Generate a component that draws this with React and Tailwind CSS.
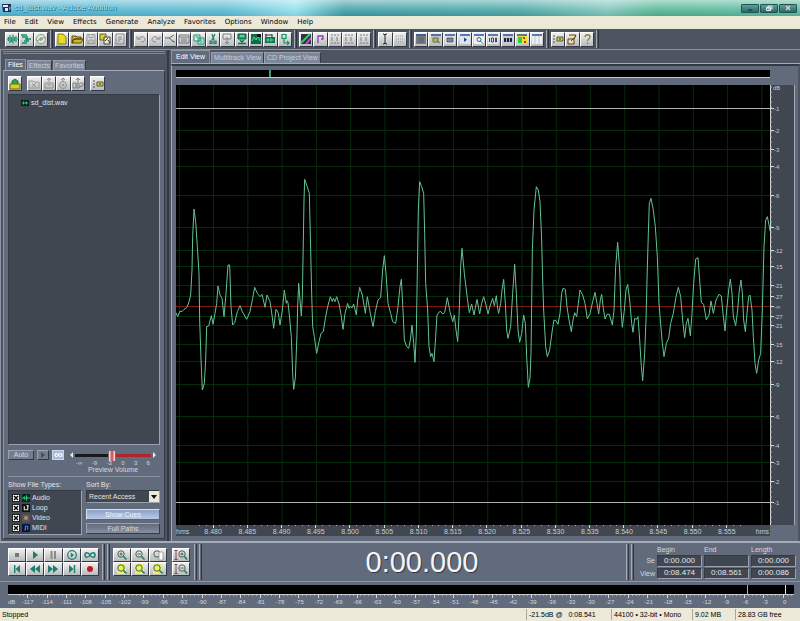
import React from "react";

/* ---------- small drawings used on the tool buttons ---------- */

const GLYPHS = {
  wave: <path d="M1 6h1M2.500 4v4M4 2v8M5.500 4v5M7 1.500v9M8.500 4v4M10 3v6M11 6h1" stroke="#12936a" strokeWidth="1.200" />,
  multi: <path d="M1 2h6M2 4h4M5 6h6M4 8h5M2 10h5M7 3v5" stroke="#12936a" strokeWidth="1.500" />,
  cd: <g fill="none" stroke="#8b9b78"><circle cx="6" cy="6" r="4.500" fill="#e6e8dc" /><circle cx="6" cy="6" r="1.300" /><path d="M2 8l8-4" stroke="#5faa80" /></g>,
  page: <path d="M2 1h5l3 3v7H2z" fill="#e8dc1c" stroke="#6b6410" strokeWidth=".8" />,
  folder: <path d="M1 3h4l1 1h4v2H3L1 10zM3 6h9l-2 4H1z" fill="#d8b81c" stroke="#4a4010" strokeWidth=".9" />,
  disk: <path d="M2 1.500h8v9H2zM4 1.500v3h4v-3M4 10V7h4v3" fill="none" stroke="#9a9a9a" />,
  copyFolder: <g strokeWidth=".9"><path d="M1 1h6v6H1z" fill="#e2cf2a" stroke="#555020" /><path d="M5 4h6v7H5z" fill="#ece8c8" stroke="#333" /><path d="M6 8l3-3M9 7l2 3" stroke="#222" /></g>,
  doc: <path d="M2 1h8v10H2zM4 4h4M4 6h4M4 8h2" fill="none" stroke="#858585" />,
  undo: <path d="M2 3v3h4M3 6c2-3 6-3 7 0 0 2-1 3-4 3" fill="none" stroke="#8a8a8a" />,
  redo: <path d="M10 3v3H6M9 6c-2-3-6-3-7 0 0 2 1 3 4 3" fill="none" stroke="#8a8a8a" />,
  node: <path d="M1 5h4l5-3M5 5l5 4M8 8l3 1" fill="none" stroke="#666" />,
  box: <path d="M1 2h10v8H1zM1 4h10M3 6h6M3 8h6" fill="none" stroke="#777" />,
  copy: <path d="M1 2h6v6H1zM5 5h6v6H5zM2.500 4h3M6.500 7h3M6.500 9h3" fill="#dff5ea" stroke="#15936c" />,
  cut: <path d="M5 1l2 6M8 1L5 7M3 8h2v2.500H3zM7 8h2v2.500H7z" fill="none" stroke="#168060" strokeWidth="1.200" />,
  paste: <path d="M2 1h8v5H2zM6 4v7M4 9l2 2 2-2" fill="none" stroke="#808080" />,
  mixPaste: <g><path d="M2 1h8v5H2z" fill="#19a566" stroke="#0c5b3c" /><path d="M4 3h4" stroke="#bdf3d8" /><path d="M4 7l2 2 2-2M2 10.500h8" stroke="#117a4c" strokeWidth="1.500" /></g>,
  darkWave: <g><path d="M1 1h10v10H1z" fill="#0f6b43" /><path d="M2 8l2-4 2 3 2-4 2 5" fill="none" stroke="#54e08b" /><path d="M7 1h4v3H7z" fill="#112" /></g>,
  crop: <g><path d="M1 4h10v6H1z" fill="#12724c" /><path d="M2 7h8M4 5v4M7 5v4" stroke="#48d68c" /><path d="M1 2h7M2 1v3M8 1v3" stroke="#333" /></g>,
  loop: <path d="M3 1.500h4v4H3zM5 6v4h5M8 8l2 2-2 2" fill="none" stroke="#149168" strokeWidth="1.200" />,
  spectral: <g><path d="M1 1h10v10H1z" fill="#3a2b59" /><path d="M1 10L10 1" stroke="#3ecb55" strokeWidth="2" /><path d="M6 11l5-6" stroke="#bf66d8" strokeWidth="1.500" /></g>,
  step: <path d="M3 10V3h5v3H6" fill="none" stroke="#8a3cae" strokeWidth="1.300" />,
  grid: <path d="M2 2h8M2 5h3M7 5h3M2 7h3M7 7h3M2 10h8" fill="none" stroke="#7c7c7c" strokeDasharray="2 1" />,
  ibeam: <path d="M4 1h1l1 1 1-1h1M6 2v8M4 11h1l1-1 1 1h1" fill="none" stroke="#222" />,
  dotted: <path d="M2 3h8M2 6h8M2 9h8" stroke="#9a9a9a" strokeDasharray="1 1" />,
  winList: <g><path d="M1 1h10v10H1z" fill="#777a80" /><path d="M1 2h10" stroke="#2c54a8" strokeWidth="1.500" /><path d="M3 5h6M3 7h6M3 9h6" stroke="#5b5e65" /></g>,
  winZoom: <g><path d="M1 1h10v10H1z" fill="#c4c6b8" /><path d="M1 2h10" stroke="#2c54a8" strokeWidth="1.500" /><path d="M3 5h5v4H3zM7 8l3 2" fill="#b8b848" stroke="#666" /></g>,
  winPic: <g><path d="M1 1h10v10H1z" fill="#dde0e4" /><path d="M1 2h10" stroke="#2c54a8" strokeWidth="1.500" /><path d="M3 5h6v4H3z" fill="#789" stroke="#444" strokeWidth=".7" /></g>,
  winPlay: <g><path d="M1 1h10v10H1z" fill="#dfe4ee" /><path d="M1 2h10" stroke="#2c54a8" strokeWidth="1.500" /><path d="M5 4.500l3 2.200-3 2.200z" fill="#124e8d" /></g>,
  winLens: <g><path d="M1 1h10v10H1z" fill="#eef0f6" /><path d="M1 2h10" stroke="#2c54a8" strokeWidth="1.500" /><circle cx="6" cy="6.500" r="2" fill="none" stroke="#277" /><path d="M7.500 8l2.500 2.500" stroke="#277" /></g>,
  winTime: <g><path d="M1 1h10v10H1z" fill="#e4e6ea" /><path d="M1 2h10" stroke="#2c54a8" strokeWidth="1.500" /><path d="M2.500 5v4M4.500 5h2v4h-2zM8.500 5h1v4h-1z" fill="none" stroke="#445" /></g>,
  winDark: <g><path d="M1 1h10v10H1z" fill="#c6cad4" /><path d="M1 2h10" stroke="#2c54a8" strokeWidth="1.500" /><path d="M2 5h8v4H2z" fill="#223" /><path d="M4.500 5v4M7.500 5v4" stroke="#aab" /></g>,
  winColor: <g><path d="M1 1h10v10H1z" fill="#e9e42f" /><path d="M1 2h10" stroke="#2c54a8" strokeWidth="1.500" /><path d="M2 4h4v6H2z" fill="#27d341" /><path d="M7 4h2v2H7zM8 8h2v2H8z" fill="#d22" /></g>,
  winBlank: <g><path d="M1 1h10v10H1z" fill="#eceef2" /><path d="M1 2h10" stroke="#2c54a8" strokeWidth="1.500" /><path d="M4 3v8M8 3v8" stroke="#c0c8d8" /></g>,
  options: <g><path d="M1 3h2M1 6h2M1 9h2" stroke="#555" /><path d="M5 4h6v4H5z" fill="#d8cf2a" stroke="#555" /><path d="M7 6h2" stroke="#333" /></g>,
  script: <path d="M3 2h7l-2 4M2 6h6v5H2zM5 8l5-5" fill="#ecdfae" stroke="#5c4416" />,
  help: <path d="M4 4c0-3 5-3 5 0 0 2-2.500 2-2.500 4M6.500 9.500v1.500" fill="none" stroke="#8b7f34" strokeWidth="1.300" />,
  open: <g><path d="M1 6h10v5H1z" fill="#d3cf25" stroke="#55521a" strokeWidth=".8" /><path d="M3 6V3l3-2 3 2v3" fill="#2da04a" stroke="#1b5f2e" strokeWidth=".8" /></g>,
  close: <path d="M1 3h4l1 1h5v6H1zM4 5l4 4M8 5L4 9" fill="none" stroke="#9a9a9a" />,
  insert: <path d="M6 0v4M4 2l2-2 2 2M2 5h8v5H2zM4 7h4" fill="none" stroke="#8e8e8e" />,
  disc: <g fill="none" stroke="#8e8e8e"><circle cx="6" cy="7" r="3.500" /><circle cx="6" cy="7" r="1" /><path d="M6 0v3M4 2l2-2 2 2" /></g>,
  loopInsert: <path d="M6 0v4M4 2l2-2 2 2M1 5h3v5H1zM5 5h2v5H5zM8 5h3v3H8v2" fill="none" stroke="#7e7e7e" />,
};

const PLAY = "#1b7e70";
const TRANSPORT = [
  ["Stop", <path d="M6 4h4v4H6z" fill="#777" />],
  ["Play", <path d="M6 2l5 4-5 4z" fill={PLAY} />],
  ["Pause", <path d="M5.500 2h2v8h-2zM9 2h2v8H9z" fill="#8a8a8a" />],
  ["Play to end", <g><circle cx="8" cy="6" r="4.300" fill="none" stroke={PLAY} strokeWidth="1.200" /><path d="M6.800 3.500L10 6 6.800 8.500z" fill={PLAY} /></g>],
  ["Loop", <path d="M8 6c-1.500-3-5-3-5 0s3.500 3 5 0 5-3 5 0-3.500 3-5 0z" fill="none" stroke={PLAY} strokeWidth="1.500" />],
  ["Go to start", <path d="M5 2h1.400v8H5zM11 2v8L6.500 6z" fill={PLAY} />],
  ["Rewind", <path d="M8 2v8L3 6zM13 2v8L8 6z" fill={PLAY} />],
  ["Fast forward", <path d="M3 2v8l5-4zM8 2v8l5-4z" fill={PLAY} />],
  ["Go to end", <path d="M9.800 2h1.400v8H9.800zM5 2v8l4.500-4z" fill={PLAY} />],
  ["Record", <circle cx="8" cy="6" r="3" fill="#c4181f" />],
];

function Lens({ inner, page }) {
  return (
    <g fill="none" stroke="#3f6258">
      {page === "yellow" && <path d="M3 1h9v10H3z" fill="#eeee62" stroke="none" />}
      <circle cx="7" cy="5" r="3.200" />
      <path d="M9.500 7.500l3 3" stroke="#21806b" strokeWidth="1.700" />
      {page === "white" && <path d="M9 3h4v8H9z" fill="#fff" stroke="#888" strokeWidth=".7" />}
      {inner && <path d={inner} strokeWidth="1" />}
    </g>
  );
}

const ZOOMS = [
  ["Zoom in", <Lens inner="M5.500 5h3M7 3.500v3" />],
  ["Zoom out", <Lens inner="M5.500 5h3" />],
  ["Zoom full", <Lens page="white" />],
  ["Zoom to selection", <Lens page="yellow" />],
  ["Zoom to left edge", <Lens page="yellow" />],
  ["Zoom to right edge", <Lens page="yellow" />],
];

const VERTICAL_ZOOMS = [
  ["Zoom in vertically", "M7.500 5h3M9 3.500v3"],
  ["Zoom out vertically", "M7.500 5h3"],
];

const TOOL_GROUPS = [
  { width: "w-[43px]", icons: ["wave", "multi", "cd"] },
  { width: "w-[72px]", icons: ["page", "folder", "disk", "copyFolder", "doc"] },
  { width: "w-[158px]", icons: ["undo", "redo", "node", "box", "copy", "cut", "paste", "mixPaste", "darkWave", "crop", "loop"] },
  { width: "w-[72px]", icons: ["spectral", "step", "grid", "grid", "grid"] },
  { width: "w-[29px]", icons: ["ibeam", "dotted"] },
  { width: "w-[130px]", icons: ["winList", "winZoom", "winPic", "winPlay", "winLens", "winTime", "winDark", "winColor", "winBlank"] },
  { width: "w-[43px]", icons: ["options", "script", "help"] },
];

const KEY =
  "flex min-w-0 items-center justify-center overflow-hidden border border-t-white border-l-white border-r-[#343a45] border-b-[#343a45] bg-linear-to-b from-[#f0f0ef] to-[#b9babc]";

function ToolButton({ name, className = "" }) {
  return (
    <button type="button" aria-label={name} className={`${KEY} h-[15px] ${className}`}>
      <svg viewBox="0 0 12 12" className="size-3 shrink-0" fill="none">{GLYPHS[name]}</svg>
    </button>
  );
}

function PadButton({ label, children }) {
  return (
    <button type="button" aria-label={label} className={`${KEY} h-[14px]`}>
      <svg viewBox="0 0 16 12" className="h-3 w-4 shrink-0">{children}</svg>
    </button>
  );
}

function Grip() {
  return <div className="w-[3px] self-stretch border-x border-l-[#a3abb8] border-r-[#2f3540]" />;
}

/* ---------- waveform data ---------- */

const WAVE_PARTS = [
  [-18, [18,458,23,470,30,453,36,455,42,448,50,443,55,432,62,405,66,330,68,230,72,147,77,185,82,260,87,340,89,480,93,600,97,690,103,670,107,600,110,500,116,498,124,467,129,493,135,460,140,430,144,378,150,405,156,415,162,470,168,400,174,315,179,315,183,440,188,495,194,488,202,455,210,437,217,455,230,478,240,455,248,415,254,382,262,400,270,410,276,403,285,442,291,405,300,425,306,465,311,505,318,448,325,460,330,495,337,450,343,390,349,430,351,422,354,428,358,465,364,530,368,640,371,688,376,655,381,520,383,440,386,370,390,420,394,468,397,410,399,300,402,120,404,58,410,75,418,100,422,270,425,400,428,500,433,530,440,580,447,545,453,520,460,515,466,475,473,440,481,410,487,425,490,415,495,425,500,410,508,435,514,470,519,508,525,460,533,430,537,445,541,438,546,444,551,432,559,465,563,420,569,382,577,405,586,460,592,410,600,455,609,500,616,455,624,420,632,413,638,330]],
  [612, [13,287,18,340,24,430,32,460,38,485,47,490,54,440,60,380,64,358,69,450,73,540,80,560,86,565,91,540,96,495,101,550,105,607,109,520,112,330,115,150,119,65,125,80,131,100,134,220,137,370,143,450,147,560,152,590,156,580,162,605,167,530,171,465,181,453,188,462,194,458,202,413,210,455,218,485,223,465,228,510,233,545,237,470,242,320,246,265,253,340,262,415,268,458,275,432,282,465,291,418,299,462,305,430,311,410,318,435,324,462,331,435,338,415,343,437,349,407,353,445,356,460,362,430,366,390,371,358,376,430,380,510,384,535,392,500,398,400,404,313,409,400,414,510,419,547,425,520,431,465,436,490,440,590,445,682,450,655,453,580,455,440,457,270,462,150,469,80,475,90,480,125,485,240,488,360,491,450,497,560,502,590,509,570,517,510,522,480,528,482,534,493,540,460,545,400,549,385,556,388,561,440,567,480,574,515,579,480,584,458,590,470,595,430]],
  [1212, [0,390,8,405,15,430,22,477,30,460,38,425,45,397,51,430,56,462,61,420,65,403,70,445,75,477,81,463,88,463,97,495,102,450,107,320,113,247,119,330,123,450,127,502,133,450,138,390,143,373,149,420,155,490,159,517,164,475,170,478,174,470,179,540,184,620,188,662,194,580,198,480,201,360,205,220,208,130,213,115,219,145,226,200,232,290,237,430,241,480,247,550,252,590,259,550,266,535,272,490,280,460,288,410,295,382,302,410,308,480,314,533,319,490,324,475,331,527,336,460,341,370,347,297,354,293,359,360,364,428,371,433,379,480,387,465,393,423,400,460,408,420,417,403,424,408,429,460,435,513,440,450,446,390,451,357,456,400,460,470,467,497,473,450,478,390,483,360,487,400,491,480,496,515,502,450,506,410,510,405,516,450,520,530,525,610,530,640,536,600,542,580,547,450,552,260,557,180,562,170,567,195,571,215]],
];

const WAVE_POINTS = WAVE_PARTS.flatMap(([shift, values]) =>
  values.map((v, i) => (i % 2 === 0 ? v + shift : v + 225))
).join(" ");

const LEVELS = [
  [23, "-1"], [45, "-2"], [64, "-3"], [81, "-4"], [110, "-6"], [142, "-9"], [165, "-12"], [181, "-15"],
  [200, "-21"], [211, "-27"], [221, "-∞"], [231, "-27"], [240, "-21"], [259, "-15"], [276, "-12"], [299, "-9"],
  [331, "-6"], [360, "-4"], [377, "-3"], [396, "-2"], [417, "-1"],
];

const LEVEL_COLORS = { "-1": "#b0b0b0", "-∞": "#7c1a0c" };

const pct = (value, total) => `${(value / total) * 100}%`;

function WaveDisplay() {
  return (
    <svg viewBox="0 0 1782 1320" preserveAspectRatio="none" className="block h-full w-full bg-black" role="img" aria-label="Waveform">
      {Array.from({ length: 18 }, (_, i) => (
        <path key={i} d={`M${10 + i * 102.800} 0V1320`} stroke="#052b0b" vectorEffect="non-scaling-stroke" />
      ))}
      {LEVELS.map(([y, label], i) => (
        <path
          key={i}
          d={`M0 ${y * 3 + 1.500}H1782`}
          stroke={LEVEL_COLORS[label] || "#052b0b"}
          vectorEffect="non-scaling-stroke"
          shapeRendering="crispEdges"
        />
      ))}
      <polyline points={WAVE_POINTS} fill="none" stroke="#62c493" strokeWidth="1" vectorEffect="non-scaling-stroke" />
    </svg>
  );
}

function LevelScale() {
  return (
    <svg className="block h-full w-[25px] border-r border-[#a3abb8] bg-[#414751]" fill="#c9ccd2">
      <line x1="0" x2="0" y1="0" y2="100%" stroke="#d8dade" strokeWidth="2" />
      {Array.from({ length: 88 }, (_, i) => (
        <line key={i} x1="0" x2="2" y1={pct(i * 5 + 2, 440)} y2={pct(i * 5 + 2, 440)} stroke="#a9adb6" strokeWidth="1" />
      ))}
      <text x="3" y="5" className="text-[6px]">dB</text>
      {LEVELS.map(([y, label], i) => (
        <React.Fragment key={i}>
          <line x1="0" x2="4" y1={pct(y + 0.500, 440)} y2={pct(y + 0.500, 440)} stroke="#d8dade" />
          <text x="4" y={pct(y + 3, 440)} className="text-[6px]">{label}</text>
        </React.Fragment>
      ))}
    </svg>
  );
}

function Ticks({ count, className = "" }) {
  return (
    <div className={`flex h-[3px] items-start ${className}`}>
      {Array.from({ length: count }, (_, i) => (
        <span key={i} className="flex flex-1 justify-center">
          <span className={i % 5 === 2 ? "h-[3px] w-px bg-[#d8dade]" : "h-px w-px bg-[#a9adb6]"} />
        </span>
      ))}
    </div>
  );
}

function TimeRuler() {
  return (
    <div className="h-[11px] bg-[#414751] text-[7px] leading-[8px] text-[#c9ccd2]">
      <div className="flex">
        <span className="w-[20px]" />
        <Ticks count={80} className="flex-1" />
        <span className="w-[26px]" />
      </div>
      <div className="flex">
        <span className="w-[20px]">hms</span>
        <div className="flex flex-1">
          {Array.from({ length: 16 }, (_, i) => (
            <span key={i} className="flex-1 text-center">{(8.48 + i * 0.005).toFixed(3)}</span>
          ))}
        </div>
        <span className="w-[26px] pr-px text-right">hms</span>
      </div>
    </div>
  );
}

/* ---------- panels ---------- */

function TitleBar() {
  const key = "flex h-[9px] w-[18px] items-center justify-center rounded-[1px] border border-[#1f5454] bg-linear-to-b from-[#5fa09c] to-[#276a68] text-white";
  return (
    <header className="flex h-4 shrink-0 items-center bg-[linear-gradient(90deg,#4fb4d4,#55b8d0_28%,#8fe0ec_37%,#3a9ca4_43%,#45a4a4_65%,#7cc4ba_76%,#4fb490_82%,#5ab8a0)]">
      <div className="flex h-full flex-1 items-center gap-[2px] bg-linear-to-b from-white/55 via-white/20 to-black/5 pr-[3px] pl-[2px]">
        <svg viewBox="0 0 10 10" className="size-[10px]">
          <path d="M0 1h9v8H1z" fill="#1f2b55" /><path d="M1 2h5v2H1zM3 5h3v3H3z" fill="#e4e6f0" /><path d="M7 3l2 2-2 3z" fill="#8b92c0" />
        </svg>
        <h1 className="flex-1 text-[8px] text-[#b4ecfa] [text-shadow:0_0_1px_#155c7c,1px_1px_0_#2a7a9c]">sd_dist.wav - Adobe Audition</h1>
        <div className="flex gap-px">
          <button type="button" aria-label="Minimize" className={key}><svg viewBox="0 0 8 6" className="h-[6px] w-2"><path d="M2 5h4" stroke="#123" /></svg></button>
          <button type="button" aria-label="Restore" className={key}><svg viewBox="0 0 8 6" className="h-[6px] w-2"><path d="M3 1h4v3H3zM1.500 2.500h4v3h-4z" fill="none" stroke="#e6ecec" /></svg></button>
          <button type="button" aria-label="Close" className={key}><svg viewBox="0 0 8 6" className="h-[6px] w-2"><path d="M2 1l4 4M6 1L2 5" stroke="#f3c9c9" strokeWidth="1.300" /></svg></button>
        </div>
      </div>
    </header>
  );
}

function MenuBar() {
  const items = ["File", "Edit", "View", "Effects", "Generate", "Analyze", "Favorites", "Options", "Window", "Help"];
  return (
    <nav className="flex h-[13px] shrink-0 items-center gap-[9px] bg-[#ece9d8] px-1 font-['DejaVu_Sans',sans-serif] text-[7px] text-black">
      {items.map((item) => <button type="button" key={item} className="leading-[11px]">{item}</button>)}
    </nav>
  );
}

function ToolBar() {
  return (
    <div className="flex h-[21px] shrink-0 items-center border-b border-[#8d95a2] bg-[#4e5561] pl-[5px]">
      {TOOL_GROUPS.map((group, g) => (
        <div key={g} className="flex h-full items-center">
          <div className={`flex ${group.width}`}>
            {group.icons.map((name, i) => <ToolButton key={i} name={name} className="flex-1" />)}
          </div>
          <div className="flex h-full w-[7px] items-center justify-center py-px"><Grip /></div>
        </div>
      ))}
    </div>
  );
}

const PREVIEW_MARKS = ["-∞", "-9", "-3", "0", "3", "6"];

function PreviewControls() {
  return (
    <div className="flex h-[31px] items-start justify-between pt-1 pr-1 text-[7px] text-[#d5d8de]">
      <div className="flex gap-[3px] pt-px text-[7px] leading-[8px]">
        <button type="button" className="h-[10px] w-[26px] border border-t-[#9aa2b0] border-l-[#9aa2b0] border-r-[#343a45] border-b-[#343a45] bg-[#747d8d]">Auto</button>
        <button type="button" aria-label="Play preview" className="flex h-[10px] w-[12px] items-center justify-center border border-t-[#9aa2b0] border-l-[#9aa2b0] border-r-[#343a45] border-b-[#343a45] bg-[#747d8d]">
          <svg viewBox="0 0 6 6" className="size-[6px]"><path d="M1 0l4 3-4 3z" fill="#454c58" /></svg>
        </button>
        <button type="button" aria-label="Loop preview" className="flex h-[10px] w-[12px] items-center justify-center border border-[#c9d6ee] bg-[#a9bad8]">
          <svg viewBox="0 0 9 6" className="h-[6px] w-[9px]"><path d="M4.500 3C3.500 1 1 1 1 3s2.500 2 3.500 0S8 1 8 3s-2.500 2-3.500 0z" fill="none" stroke="#fff" strokeWidth="1.200" /></svg>
        </button>
      </div>
      <div className="flex w-[86px] flex-col">
        <div className="flex items-center gap-[2px]">
          <svg viewBox="0 0 3 6" className="h-[6px] w-[3px]"><path d="M3 0v6L0 3z" fill="#e8eaee" /></svg>
          <input
            id="preview-volume" type="range" defaultValue="49"
            className="h-3 min-w-0 flex-1 appearance-none bg-transparent [&::-webkit-slider-runnable-track]:h-[3px] [&::-webkit-slider-runnable-track]:bg-linear-to-r [&::-webkit-slider-runnable-track]:from-[#17191d] [&::-webkit-slider-runnable-track]:from-50% [&::-webkit-slider-runnable-track]:to-[#b0252c] [&::-webkit-slider-runnable-track]:to-50% [&::-webkit-slider-thumb]:-mt-1 [&::-webkit-slider-thumb]:h-[12px] [&::-webkit-slider-thumb]:w-[8px] [&::-webkit-slider-thumb]:appearance-none [&::-webkit-slider-thumb]:border [&::-webkit-slider-thumb]:border-[#6b6f78] [&::-webkit-slider-thumb]:bg-linear-to-r [&::-webkit-slider-thumb]:from-[#f1f1f1] [&::-webkit-slider-thumb]:via-[#c83a40] [&::-webkit-slider-thumb]:to-[#f1f1f1]"
          />
          <svg viewBox="0 0 3 6" className="h-[6px] w-[3px]"><path d="M0 0v6l3-3z" fill="#e8eaee" /></svg>
        </div>
        <div className="flex h-[5px] justify-between px-[6px] text-[6px] leading-[5px]">
          {PREVIEW_MARKS.map((mark) => <span key={mark}>{mark}</span>)}
        </div>
        <label htmlFor="preview-volume" className="text-center text-[7px] leading-[8px]">Preview Volume</label>
      </div>
    </div>
  );
}

const FILE_TYPES = [
  ["Audio", "#06251a", <path d="M0 3.500h7M2 2v3M4 1v5" stroke="#30c878" />],
  ["Loop", "#111", <path d="M2 2v3h3V2M4 1l2 1" fill="none" stroke="#ddd" />],
  ["Video", "#5b5650", <path d="M2 2h3v3H2z" fill="#b58f6f" />],
  ["MIDI", "#0a1636", <path d="M2 5h1V2h2v3" fill="none" stroke="#3f7fe4" />],
];

function FileOptions() {
  return (
    <div className="flex gap-1 border-t border-[#8d95a2] pt-[3px] text-[7px] leading-[9px] text-[#e0e2e6]">
      <fieldset className="w-[74px]">
        <legend className="mb-px">Show File Types:</legend>
        <div className="flex h-[45px] flex-col gap-px border border-t-[#343a45] border-l-[#343a45] border-r-[#9aa2b0] border-b-[#9aa2b0] bg-[#414751] py-[2px] pl-[3px]">
          {FILE_TYPES.map(([name, color, mark]) => (
            <label key={name} className="flex h-[9px] items-center gap-[2px] text-[7px]">
              <span className="grid size-2">
                <input type="checkbox" defaultChecked className="peer col-start-1 row-start-1 size-2 appearance-none border border-[#222] bg-white" />
                <svg viewBox="0 0 8 8" className="pointer-events-none col-start-1 row-start-1 hidden size-2 peer-checked:block"><path d="M2 2l4 4M6 2L2 6" stroke="#000" strokeWidth="1.400" /></svg>
              </span>
              <svg viewBox="0 0 7 7" className="size-2"><path d="M0 0h7v7H0z" fill={color} />{mark}</svg>
              <span>{name}</span>
            </label>
          ))}
        </div>
      </fieldset>
      <div className="flex flex-1 flex-col">
        <label htmlFor="sort-by" className="mb-px">Sort By:</label>
        <div className="grid border border-t-[#343a45] border-l-[#343a45] border-r-[#9aa2b0] border-b-[#9aa2b0] bg-[#414751]">
          <select id="sort-by" className="col-start-1 row-start-1 h-[11px] appearance-none bg-transparent pl-[2px] text-[7px] leading-[10px] text-[#e0e2e6]">
            <option>Recent Access</option>
          </select>
          <span className="pointer-events-none col-start-1 row-start-1 flex h-[11px] w-[10px] items-center justify-center justify-self-end bg-[#ece9d8]">
            <svg viewBox="0 0 6 4" className="h-1 w-[6px]"><path d="M0 0h6L3 4z" fill="#111" /></svg>
          </span>
        </div>
        <button type="button" className="mt-[6px] h-[11px] border border-t-[#d5e0f4] border-l-[#d5e0f4] border-r-[#5b6372] border-b-[#5b6372] bg-linear-to-b from-[#8ea2c6] to-[#b9c9e6] leading-[9px] text-[#f2f5fb]">Show Cues</button>
        <button type="button" className="mt-[3px] h-[11px] border border-t-[#9aa2b0] border-l-[#9aa2b0] border-r-[#343a45] border-b-[#343a45] bg-linear-to-b from-[#646d7d] to-[#858fa2] leading-[9px] text-[#d5d8de]">Full Paths</button>
      </div>
    </div>
  );
}

const IDLE_TAB =
  "border border-b-0 border-t-[#9aa2b0] border-l-[#9aa2b0] border-r-[#343a45] bg-[#7d879a] text-[#c8ced9]";

function FilesPanel() {
  return (
    <aside className="flex w-[167px] shrink-0 flex-col border-l border-[#8d95a2] bg-[#4e5561] px-[2px] pb-[2px]">
      <div className="mt-px h-[3px] border-y border-[#7e8695]" />
      <div role="tablist" className="mt-[5px] flex items-end gap-px pl-[2px] text-[7px] leading-[10px]">
        <button role="tab" aria-selected="true" type="button" className="h-[11px] border border-b-0 border-[#8d95a2] bg-[#626b7b] px-[2px] text-white">Files</button>
        <button role="tab" aria-selected="false" type="button" className={`${IDLE_TAB} h-[10px] px-px`}>Effects</button>
        <button role="tab" aria-selected="false" type="button" className={`${IDLE_TAB} h-[10px] px-px`}>Favorites</button>
      </div>
      <div className="flex min-h-0 flex-1 flex-col border border-t-[#a3abb8] border-l-[#8d95a2] border-r-[#343a45] border-b-[#343a45] bg-[#626b7b] px-1 pt-[5px] pb-[3px]">
        <div className="flex">
          <ToolButton name="open" className="w-[14px]" />
          <div className="ml-[5px] flex w-[58px]">
            {["close", "insert", "disc", "loopInsert"].map((name) => <ToolButton key={name} name={name} className="flex-1" />)}
          </div>
          <ToolButton name="options" className="ml-[5px] w-[15px]" />
        </div>
        <ul className="mt-[3px] min-h-0 flex-1 border border-t-[#343a45] border-l-[#343a45] border-r-[#9aa2b0] border-b-[#9aa2b0] bg-[#414751] text-[7px] leading-[9px] text-[#e0e2e6]">
          <li className="flex items-center gap-[2px] pt-[3px] pl-[12px]">
            <svg viewBox="0 0 8 6" className="h-[6px] w-2"><path d="M0 0h8v6H0z" fill="#06251a" /><path d="M1 3h6M2.500 1.500v3M5.500 1.500v3" stroke="#30c878" /></svg>
            sd_dist.wav
          </li>
        </ul>
        <PreviewControls />
        <FileOptions />
      </div>
    </aside>
  );
}

function EditPanel() {
  return (
    <main className="flex min-w-0 flex-1 flex-col border-l-2 border-[#343a45] bg-[#4e5561] pl-[2px]">
      <div role="tablist" className="flex h-[14px] shrink-0 items-end border-b border-[#a3abb8] text-[7px] leading-[10px]">
        <button role="tab" aria-selected="true" type="button" className="mr-px h-[13px] border border-b-0 border-[#8d95a2] bg-[#626b7b] px-1 text-white">Edit View</button>
        <button role="tab" aria-selected="false" type="button" className={`${IDLE_TAB} h-[11px] px-[2px]`}>Multitrack View</button>
        <button role="tab" aria-selected="false" type="button" className={`${IDLE_TAB} h-[11px] px-[2px]`}>CD Project View</button>
      </div>
      <div className="flex min-h-0 flex-1 flex-col border-t-2 border-r-2 border-t-[#343a45] border-r-[#4e5561] border-l border-l-[#a3abb8] bg-[#626b7b] pt-1 pb-[5px] pl-1">
        <div className="mr-[28px] h-[8px] shrink-0 border-b border-[#c3c8d1] bg-black">
          <div className="h-full w-[16%] border-r-2 border-[#3d9c74]" />
        </div>
        <div className="mt-[7px] flex min-h-0 flex-1 pr-[3px]">
          <div className="min-w-0 flex-1"><WaveDisplay /></div>
          <LevelScale />
        </div>
        <div className="mr-[28px]"><TimeRuler /></div>
      </div>
    </main>
  );
}

function TransportBar() {
  const cell = "w-[45px] border border-t-[#343a45] border-l-[#343a45] border-r-[#9aa2b0] border-b-[#9aa2b0] bg-[#414751] text-center text-[8px] leading-[8px] text-[#e4e6ea]";
  return (
    <section className="flex h-[41px] shrink-0 border-t-2 border-b border-t-[#a3abb8] border-b-[#8d95a2] bg-[#626b7b] py-px">
      <div className="ml-2 grid w-[91px] grid-cols-5 content-center">
        {TRANSPORT.map(([label, art]) => <PadButton key={label} label={label}>{art}</PadButton>)}
      </div>
      <div className="flex w-[14px] justify-center gap-[2px]"><Grip /><Grip /></div>
      <div className="grid w-[54px] grid-cols-3 content-center">
        {ZOOMS.map(([label, art]) => <PadButton key={label} label={label}>{art}</PadButton>)}
      </div>
      <div className="ml-[5px] grid w-[18px] content-center">
        {VERTICAL_ZOOMS.map(([label, d]) => (
          <PadButton key={label} label={label}>
            <path d="M3 1v10M1.500 1.500h3M1.500 10.500h3" fill="none" stroke="#7a3b45" strokeWidth=".9" />
            <circle cx="9" cy="5" r="3.200" fill="none" stroke="#3f6258" />
            <path d="M11.500 7.500l2.500 3" stroke="#21806b" strokeWidth="1.700" />
            <path d={d} stroke="#3f6258" />
          </PadButton>
        ))}
      </div>
      <div className="flex w-[12px] justify-center gap-[2px] pl-[3px]"><Grip /><Grip /></div>
      <output className="flex flex-1 items-center justify-center pl-4 text-[29px] leading-none text-[#f4f5f7] [text-shadow:1px_1px_0_#343a45]">0:00.000</output>
      <div className="flex w-[8px] justify-center gap-[2px]"><Grip /><Grip /></div>
      <table className="mr-[2px] border-separate border-spacing-x-[2px] border-spacing-y-px text-[7px] leading-[9px] text-[#d5d8de]">
        <thead>
          <tr>
            <td className="w-[19px]" />
            <th scope="col" className="text-left font-normal">Begin</th>
            <th scope="col" className="text-left font-normal">End</th>
            <th scope="col" className="text-left font-normal">Length</th>
          </tr>
        </thead>
        <tbody>
          <tr><th scope="row" className="text-right font-normal">Se</th><td className={cell}>0:00.000</td><td className={cell} /><td className={cell}>0:00.000</td></tr>
          <tr><th scope="row" className="text-right font-normal">View</th><td className={cell}>0:08.474</td><td className={cell}>0:08.561</td><td className={cell}>0:00.086</td></tr>
        </tbody>
      </table>
    </section>
  );
}

function LevelMeter() {
  return (
    <section className="flex h-[26px] shrink-0 flex-col bg-[#626b7b] px-[6px] pt-[3px] text-[6px] leading-[8px] text-[#d5d8de]">
      <div className="ml-[2px] flex h-[9px] shrink-0 justify-end bg-black">
        <span className="mr-[37px] w-px bg-[#c9b62a]" />
        <span className="mr-[8px] w-px bg-[#e8e8e8]" />
      </div>
      <div className="ml-[2px] flex border-t border-[#c3c8d1]">
        <span className="w-[10px]" />
        <Ticks count={200} className="flex-1" />
      </div>
      <div className="ml-[2px] flex">
        <span className="w-[10px]">dB</span>
        {Array.from({ length: 40 }, (_, i) => (
          <span key={i} className="w-0 flex-1 text-center">{i === 39 ? "0" : -117 + i * 3}</span>
        ))}
      </div>
    </section>
  );
}

function StatusBar() {
  const cell = "border-l border-[#aca899] pl-[2px] whitespace-pre";
  return (
    <footer className="flex h-[13px] shrink-0 items-center bg-[#ece9d8] pl-[2px] text-[7px] leading-[11px] text-black">
      <span className="flex-1">Stopped</span>
      <span className={`${cell} w-[85px]`}>{"-21.5dB @   0:08.541"}</span>
      <span className={`${cell} w-[81px]`}>44100 • 32-bit • Mono</span>
      <span className={`${cell} w-[43px]`}>9.02 MB</span>
      <span className={`${cell} w-[65px]`}>28.83 GB free</span>
    </footer>
  );
}

export default function App() {
  return (
    <div className="flex h-screen min-h-[400px] flex-col overflow-hidden bg-[#4e5561] font-['Liberation_Sans',Arial,sans-serif] select-none">
      <TitleBar />
      <MenuBar />
      <ToolBar />
      <div className="flex min-h-0 flex-1">
        <FilesPanel />
        <EditPanel />
      </div>
      <TransportBar />
      <LevelMeter />
      <StatusBar />
    </div>
  );
}
